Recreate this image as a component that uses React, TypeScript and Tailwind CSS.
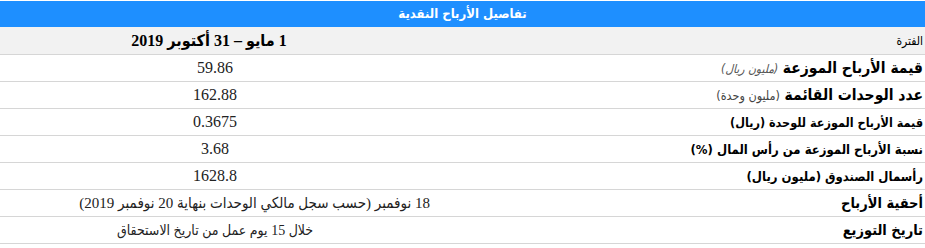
import React from "react";

const serif = { fontFamily: '"Liberation Serif", "Times New Roman", "DejaVu Sans Condensed", serif' };
const arCond = { fontFamily: '"DejaVu Sans Condensed", "DejaVu Sans", sans-serif' };

type Row = { label: React.ReactNode; value: React.ReactNode; valueClass: string };

const rows: Row[] = [
  {
    label: (
      <>
        <span className="font-bold text-[15.5px]">قيمة الأرباح الموزعة</span>{" "}
        <span className="italic font-normal text-[#555] text-[12px]">(مليون ريال)</span>
      </>
    ),
    value: "59.86",
    valueClass: "text-center text-[16px]",
  },
  {
    label: (
      <>
        <span className="font-bold text-[15.5px]">عدد الوحدات القائمة</span>{" "}
        <span className="text-[#444] font-normal text-[12.5px]">(مليون وحدة)</span>
      </>
    ),
    value: "162.88",
    valueClass: "text-center text-[16px]",
  },
  {
    label: <span className="font-bold text-[12.5px]">قيمة الأرباح الموزعة للوحدة (ريال)</span>,
    value: "0.3675",
    valueClass: "text-center text-[16px]",
  },
  {
    label: <span className="font-semibold text-[13px]">نسبة الأرباح الموزعة من رأس المال <b>(%)</b></span>,
    value: "3.68",
    valueClass: "text-center text-[16px]",
  },
  {
    label: <span className="font-semibold text-[13px]">رأسمال الصندوق (مليون ريال)</span>,
    value: "1628.8",
    valueClass: "text-center text-[16px]",
  },
  {
    label: <span className="font-bold text-[14.5px]">أحقية الأرباح</span>,
    value: "18 نوفمبر (حسب سجل مالكي الوحدات بنهاية 20 نوفمبر 2019)",
    valueClass: "text-right text-[15px]",
  },
  {
    label: <span className="font-bold text-[14.5px]">تاريخ التوزيع</span>,
    value: "خلال 15 يوم عمل من تاريخ الاستحقاق",
    valueClass: "text-center text-[14px]",
  },
];

export default function App() {
  return (
    <div dir="rtl" className="w-[925px] h-[248px] bg-white pt-px text-black" style={arCond}>
      <div className="h-[26px] bg-[#1e8fff] flex items-center justify-center text-white font-bold text-[13px]">
        تفاصيل الأرباح النقدية
      </div>
      <div className="flex h-[28px] bg-[#f2f2f2] border-b border-[#d6d6d6] items-center">
        <div className="w-[495px] pr-[2px] text-[12px]">الفترة</div>
        <div className="flex-1 text-center font-bold text-[16px] pr-[12px]" style={serif}>
          1 مايو – 31 أكتوبر 2019
        </div>
      </div>
      {rows.map((r, i) => (
        <div key={i} className="flex h-[27px] border-b border-[#d6d6d6] items-center">
          <div className="w-[495px] pr-[2px] whitespace-nowrap">{r.label}</div>
          <div className={"flex-1 text-[#222] whitespace-nowrap " + r.valueClass} style={serif}>
            {r.value}
          </div>
        </div>
      ))}
    </div>
  );
}
